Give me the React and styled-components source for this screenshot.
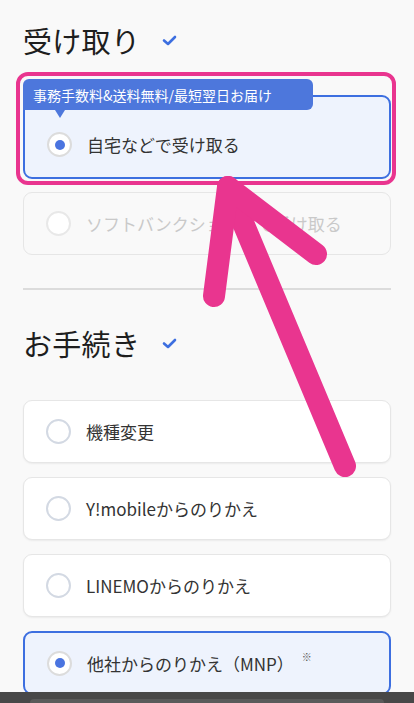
import React from 'react'
import styled, { createGlobalStyle } from 'styled-components'

const Global = createGlobalStyle`
  html, body {
    margin: 0;
    padding: 0;
    background: #f9f9f9;
    font-family: "Noto Sans CJK JP", "Noto Sans", sans-serif;
    color: #222;
  }
`

const Page = styled.div`
  position: relative;
  width: 414px;
  height: 703px;
  overflow: hidden;
  padding: 0 23px 0 23px;
  box-sizing: border-box;
`

const Heading = styled.div`
  display: flex;
  align-items: center;
  gap: 22px;
  height: 40px;
  margin-top: ${p => p.top}px;
  margin-bottom: ${p => p.bottom}px;

  h2 {
    margin: 0;
    font-size: 29px;
    font-weight: 400;
    letter-spacing: 0.3px;
    color: #1e1e1e;
  }
`

const List = styled.div`
  display: flex;
  flex-direction: column;
  gap: ${p => p.gap}px;
`

const Featured = styled.div`
  position: relative;
  display: flex;
  flex-direction: column;
`

const Highlight = styled.div`
  position: absolute;
  left: -7px;
  right: -5px;
  top: -7px;
  bottom: -6px;
  border: 4px solid #e9358f;
  border-radius: 12px;
  pointer-events: none;
`

const Badge = styled.div`
  position: relative;
  z-index: 1;
  align-self: flex-start;
  width: 290px;
  height: 31px;
  box-sizing: border-box;
  padding: 0 10px;
  display: flex;
  align-items: center;
  background: #4d77dc;
  color: #fff;
  font-size: 14px;
  border-radius: 6px 6px 6px 0;
  margin-bottom: -15px;

  &::after {
    content: '';
    position: absolute;
    left: 32px;
    top: 31px;
    border-left: 5px solid transparent;
    border-right: 5px solid transparent;
    border-top: 8px solid #4d77dc;
  }
`

const Card = styled.div`
  flex: none;
  box-sizing: border-box;
  height: ${p => p.h}px;
  padding: ${p => p.pt}px 0 0 22px;
  display: flex;
  align-items: center;
  gap: 15px;
  border-radius: 9px;
  background: ${p => (p.selected ? '#eef3fd' : p.disabled ? '#f9f9f9' : '#fff')};
  border: ${p => (p.selected ? '2px solid #3d6fe0' : '1px solid #e6e6e6')};
  box-shadow: ${p => (p.disabled || p.selected ? 'none' : '0 1px 2px rgba(0,0,0,0.06)')};
  color: ${p => (p.disabled ? '#c9c9c9' : '#333')};
  font-size: 17px;
`

const Radio = styled.span`
  flex: none;
  width: 25px;
  height: 25px;
  box-sizing: border-box;
  border-radius: 50%;
  border: 2px solid ${p => (p.disabled ? '#e8e8e8' : p.checked ? '#dcdcdc' : '#d3d9e3')};
  background: #fff;
  display: flex;
  align-items: center;
  justify-content: center;

  &::after {
    content: '';
    display: ${p => (p.checked ? 'block' : 'none')};
    width: 10px;
    height: 10px;
    border-radius: 50%;
    background: #4a74e0;
  }
`

const Note = styled.sup`
  font-size: 10px;
  margin-left: 8px;
  position: relative;
  top: -3px;
  color: #555;
`

const Divider = styled.hr`
  border: none;
  height: 2px;
  background: #dcdcdc;
  margin: 33px 0 0;
`

const Footer = styled.div`
  position: absolute;
  left: 0;
  right: 0;
  bottom: 0;
  height: 11px;
  background: #484848;
  padding: 7px 30px 0;
  box-sizing: border-box;

  div {
    height: 100%;
    background: #5a5a5a;
    border-radius: 6px 6px 0 0;
  }
`

const Overlay = styled.svg`
  position: absolute;
  left: 0;
  top: 0;
  pointer-events: none;
`

function Check() {
  return (
    <svg width="15" height="11" viewBox="0 0 15 11">
      <path d="M2 5.5 L6 9 L13 2" fill="none" stroke="#3d6fe0" strokeWidth="2.6" strokeLinecap="round" strokeLinejoin="round" />
    </svg>
  )
}

function Option({ label, checked, disabled, selected }) {
  return (
    <Card h={63} pt={0} selected={selected} disabled={disabled}>
      <Radio checked={checked} disabled={disabled} />
      <span>{label}</span>
    </Card>
  )
}

export default function App() {
  return (
    <Page>
      <Global />
      <Heading top={20} bottom={19}>
        <h2>受け取り</h2>
        <Check />
      </Heading>

      <List gap={13}>
        <Featured>
          <Highlight />
          <Badge>事務手数料&amp;送料無料/最短翌日お届け</Badge>
          <Card h={84} pt={15} selected>
            <Radio checked />
            <span>自宅などで受け取る</span>
          </Card>
        </Featured>
        <Option label="ソフトバンクショップで受け取る" disabled />
      </List>

      <Divider />

      <Heading top={33} bottom={37}>
        <h2>お手続き</h2>
        <Check />
      </Heading>

      <List gap={14}>
        <Option label="機種変更" />
        <Option label="Y!mobileからのりかえ" />
        <Option label="LINEMOからのりかえ" />
        <Card h={64} pt={0} selected>
          <Radio checked />
          <span>他社からのりかえ（MNP）<Note>※</Note></span>
        </Card>
      </List>

      <Footer><div /></Footer>

      <Overlay width="414" height="703" viewBox="0 0 414 703">
        <g fill="none" stroke="#e9358f" strokeWidth="22" strokeLinecap="round" strokeLinejoin="round">
          <line x1="228" y1="187" x2="345" y2="466" />
          <polyline points="214,296 228,187 316,254" />
        </g>
      </Overlay>
    </Page>
  )
}
